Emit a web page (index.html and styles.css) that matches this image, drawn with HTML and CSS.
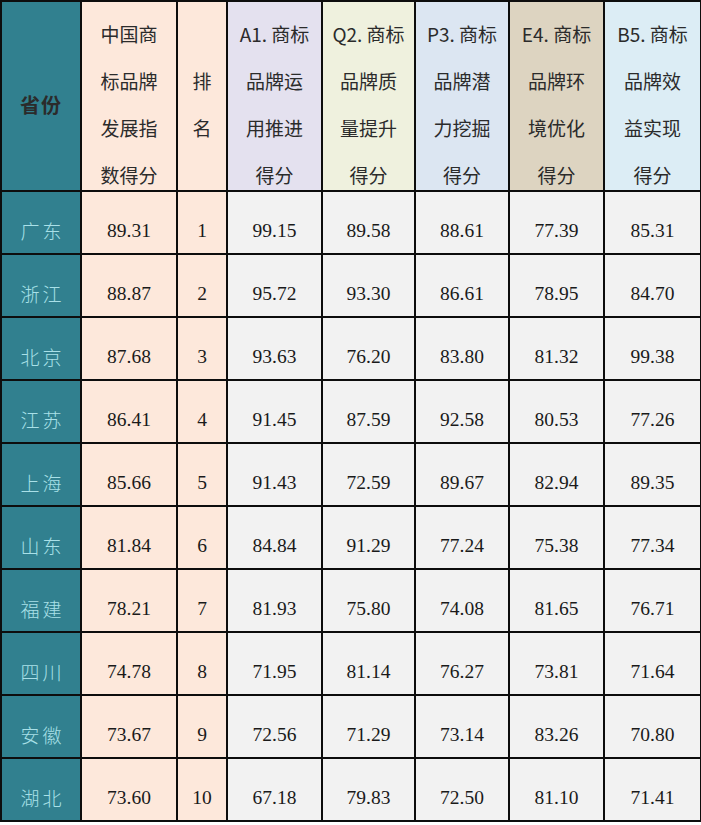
FILE: index.html
```html
<!DOCTYPE html>
<html lang="zh">
<head>
<meta charset="utf-8">
<title>中国商标品牌发展指数</title>
<link rel="stylesheet" href="styles.css">
</head>
<body>
<table class="grid">
  <colgroup>
    <col class="c-prov">
    <col class="c-index">
    <col class="c-rank">
    <col class="c-a1">
    <col class="c-q2">
    <col class="c-p3">
    <col class="c-e4">
    <col class="c-b5">
  </colgroup>
  <thead>
    <tr>
      <th class="h-prov"><div class="h-box h-mid">省份</div></th>
      <th class="h-peach"><div class="h-box">中国商<br>标品牌<br>发展指<br>数得分</div></th>
      <th class="h-peach"><div class="h-box h-two">排<br>名</div></th>
      <th class="h-a1"><div class="h-box">A1. 商标<br>品牌运<br>用推进<br>得分</div></th>
      <th class="h-q2"><div class="h-box">Q2. 商标<br>品牌质<br>量提升<br>得分</div></th>
      <th class="h-p3"><div class="h-box">P3. 商标<br>品牌潜<br>力挖掘<br>得分</div></th>
      <th class="h-e4"><div class="h-box">E4. 商标<br>品牌环<br>境优化<br>得分</div></th>
      <th class="h-b5"><div class="h-box">B5. 商标<br>品牌效<br>益实现<br>得分</div></th>
    </tr>
  </thead>
  <tbody>
    <tr><td class="prov">广东</td><td class="peach">89.31</td><td class="peach">1</td><td>99.15</td><td>89.58</td><td>88.61</td><td>77.39</td><td>85.31</td></tr>
    <tr><td class="prov">浙江</td><td class="peach">88.87</td><td class="peach">2</td><td>95.72</td><td>93.30</td><td>86.61</td><td>78.95</td><td>84.70</td></tr>
    <tr><td class="prov">北京</td><td class="peach">87.68</td><td class="peach">3</td><td>93.63</td><td>76.20</td><td>83.80</td><td>81.32</td><td>99.38</td></tr>
    <tr><td class="prov">江苏</td><td class="peach">86.41</td><td class="peach">4</td><td>91.45</td><td>87.59</td><td>92.58</td><td>80.53</td><td>77.26</td></tr>
    <tr><td class="prov">上海</td><td class="peach">85.66</td><td class="peach">5</td><td>91.43</td><td>72.59</td><td>89.67</td><td>82.94</td><td>89.35</td></tr>
    <tr><td class="prov">山东</td><td class="peach">81.84</td><td class="peach">6</td><td>84.84</td><td>91.29</td><td>77.24</td><td>75.38</td><td>77.34</td></tr>
    <tr><td class="prov">福建</td><td class="peach">78.21</td><td class="peach">7</td><td>81.93</td><td>75.80</td><td>74.08</td><td>81.65</td><td>76.71</td></tr>
    <tr><td class="prov">四川</td><td class="peach">74.78</td><td class="peach">8</td><td>71.95</td><td>81.14</td><td>76.27</td><td>73.81</td><td>71.64</td></tr>
    <tr><td class="prov">安徽</td><td class="peach">73.67</td><td class="peach">9</td><td>72.56</td><td>71.29</td><td>73.14</td><td>83.26</td><td>70.80</td></tr>
    <tr><td class="prov">湖北</td><td class="peach">73.60</td><td class="peach">10</td><td>67.18</td><td>79.83</td><td>72.50</td><td>81.10</td><td>71.41</td></tr>
  </tbody>
</table>
</body>
</html>
```

FILE: styles.css
```css
html, body {
  margin: 0;
  padding: 0;
  background: #ffffff;
}

.grid {
  border-collapse: collapse;
  table-layout: fixed;
  width: 700px;
  border: 2px solid #0d0d0d;
}

.c-prov { width: 80px; }
.c-index { width: 96px; }
.c-rank { width: 50px; }
.c-a1 { width: 95px; }
.c-q2 { width: 93px; }
.c-p3 { width: 94px; }
.c-e4 { width: 95px; }
.c-b5 { width: 97px; }

.grid th,
.grid td {
  border: 2px solid #0d0d0d;
  padding: 0;
  text-align: center;
}

.grid th {
  font-family: "Noto Sans CJK SC", "Noto Sans", sans-serif;
  font-weight: 400;
  font-size: 19px;
  color: #2b2b2b;
  vertical-align: top;
  overflow: hidden;
}

.h-box {
  height: 188px;
  box-sizing: border-box;
  padding-top: 8px;
  line-height: 47px;
  white-space: nowrap;
}

.h-two {
  padding-top: 55px;
}

.h-mid {
  display: flex;
  align-items: center;
  justify-content: center;
  padding-top: 18px;
  line-height: 1;
}

.h-prov {
  background: #31808f;
  color: #f4fbfc;
}
.h-prov .h-box {
  font-size: 20px;
  font-weight: 700;
  letter-spacing: 1px;
}

.h-peach { background: #fde8db; }
.h-a1 { background: #e4e1ef; }
.h-q2 { background: #eff1de; }
.h-p3 { background: #dce6f2; }
.h-e4 { background: #ddd4c1; }
.h-b5 { background: #dcedf5; }

.grid td {
  height: 63px;
  box-sizing: border-box;
  padding-top: 16px;
  vertical-align: middle;
  background: #f2f2f2;
  font-family: "Liberation Serif", "Times New Roman", serif;
  font-size: 19.5px;
  color: #1a1a1a;
}

.grid td.peach {
  background: #fde8db;
}

.grid td.prov {
  background: #31808f;
  color: #a9e0e8;
  font-family: "Noto Sans CJK SC", "Noto Sans", sans-serif;
  font-weight: 300;
  font-size: 19px;
  letter-spacing: 3px;
  padding-left: 3px;
}
```
